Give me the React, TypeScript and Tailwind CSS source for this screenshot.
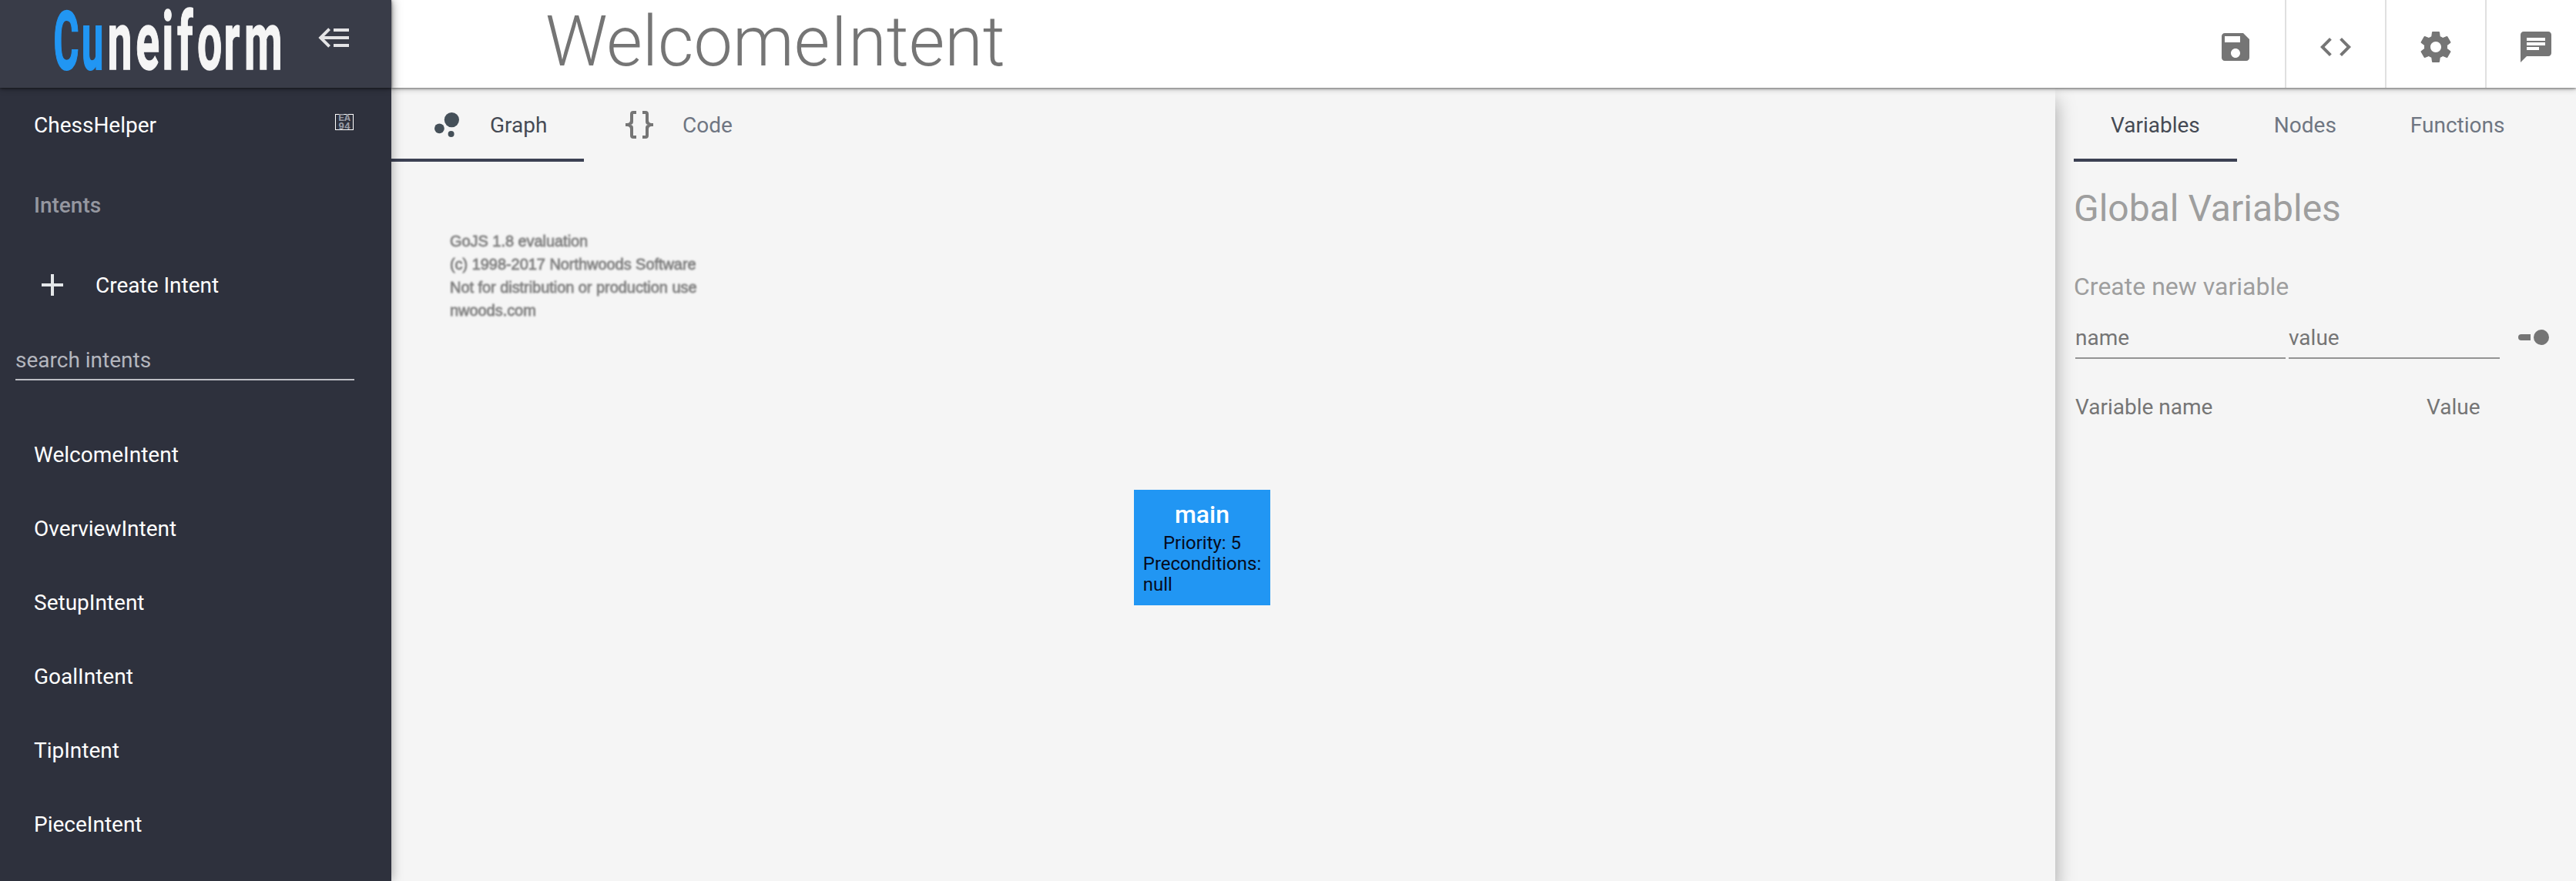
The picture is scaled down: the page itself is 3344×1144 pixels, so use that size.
import React from "react";

const PATHS = {
  back: "M5,13L9,17L7.6,18.42L1.18,12L7.6,5.58L9,7L5,11H21V13H5M21,6V8H11V6H21M21,16V18H11V16H21Z",
  add: "M19 13h-6v6h-2v-6H5v-2h6V5h2v6h6v2z",
  save: "M17 3H5c-1.11 0-2 .9-2 2v14c0 1.1.89 2 2 2h14c1.1 0 2-.9 2-2V7l-4-4zm-5 16c-1.66 0-3-1.34-3-3s1.34-3 3-3 3 1.34 3 3-1.34 3-3 3zm3-10H5V5h10v4z",
  code: "M9.4 16.6L4.8 12l4.6-4.6L8 6l-6 6 6 6 1.4-1.4zm5.2 0l4.6-4.6-4.6-4.6L16 6l6 6-6 6-1.4-1.4z",
  gear: "M19.43 12.98c.04-.32.07-.64.07-.98s-.03-.66-.07-.98l2.11-1.65c.19-.15.24-.42.12-.64l-2-3.46c-.12-.22-.39-.3-.61-.22l-2.49 1c-.52-.4-1.08-.73-1.69-.98l-.38-2.65C14.46 2.18 14.25 2 14 2h-4c-.25 0-.46.18-.49.42l-.38 2.65c-.61.25-1.17.59-1.69.98l-2.49-1c-.23-.09-.49 0-.61.22l-2 3.46c-.13.22-.07.49.12.64l2.11 1.65c-.04.32-.07.65-.07.98s.03.66.07.98l-2.11 1.65c-.19.15-.24.42-.12.64l2 3.46c.12.22.39.3.61.22l2.49-1c.52.4 1.08.73 1.69.98l.38 2.65c.03.24.24.42.49.42h4c.25 0 .46-.18.49-.42l.38-2.65c.61-.25 1.17-.59 1.69-.98l2.49 1c.23.09.49 0 .61-.22l2-3.46c.12-.22.07-.49-.12-.64l-2.11-1.65zM12 15.5c-1.93 0-3.5-1.57-3.5-3.5s1.57-3.5 3.5-3.5 3.5 1.57 3.5 3.5-1.57 3.5-3.5 3.5z",
  chat: "M20 2H4c-1.1 0-1.99.9-1.99 2L2 22l4-4h14c1.1 0 2-.9 2-2V4c0-1.1-.9-2-2-2zM6 9h12v2H6V9zm8 5H6v-2h8v2zm4-6H6V6h12v2z",
  braces: "M8,3A2,2 0 0,0 6,5V9A2,2 0 0,1 4,11H3V13H4A2,2 0 0,1 6,15V19A2,2 0 0,0 8,21H10V19H8V14A2,2 0 0,0 6,12A2,2 0 0,0 8,10V5H10V3M16,3A2,2 0 0,1 18,5V9A2,2 0 0,0 20,11H21V13H20A2,2 0 0,0 18,15V19A2,2 0 0,1 16,21H14V19H16V14A2,2 0 0,1 18,12A2,2 0 0,1 16,10V5H14V3H16Z",
};

function Icon({ name, className = "" }: { name: keyof typeof PATHS; className?: string }) {
  return (
    <svg viewBox="0 0 24 24" className={"size-12 shrink-0 fill-current " + className}>
      <path d={PATHS[name]} />
    </svg>
  );
}

// Condensed wordmark: each half is squeezed horizontally, with its letters spaced by hand.
const MARK_BLUE = [69.5, 106].map((x) => x / 0.48).join(" ");
const MARK_WHITE = [139.6, 176.3, 210.3, 230, 256, 290.6, 317].map((x) => x / 0.545).join(" ");

function Logo() {
  return (
    <svg viewBox="0 0 411 114" className="h-[114px] w-[411px] shrink-0 font-['Roboto'] font-bold">
      <text transform="scale(0.48 1)" x={MARK_BLUE} y="89.5" fontSize="105" fill="#2196f3" stroke="#2196f3" strokeWidth="2">Cu</text>
      <text transform="scale(0.545 1)" x={MARK_WHITE} y="89.5" fontSize="105" fill="#f5f5f5" stroke="#f5f5f5" strokeWidth="1.5">neiform</text>
    </svg>
  );
}

const intents = ["WelcomeIntent", "OverviewIntent", "SetupIntent", "GoalIntent", "TipIntent", "PieceIntent"];

function Sidebar() {
  return (
    <aside className="relative z-20 flex w-[508px] shrink-0 flex-col bg-[#2e313d] text-[28px] leading-8 text-white shadow-[0_0_14px_rgba(0,0,0,0.36)]">
      <div className="flex h-[114px] shrink-0 items-start bg-[#393c48] shadow-[0_1px_3px_rgba(0,0,0,0.5),0_2px_8px_rgba(0,0,0,0.25)]">
        <Logo />
        <Icon name="back" className="mt-[25px] text-[#e4e4e6]" />
      </div>
      <div className="mt-[33px] flex h-8 items-start justify-between pr-[49px] pl-11">
        <span>ChessHelper</span>
        <span className="mt-px flex h-[21px] w-6 flex-col items-center justify-center border border-white font-['Liberation_Mono'] text-[13px] leading-[11px] font-bold text-[#9a9ca5]">
          <span>EA</span>
          <span>94</span>
        </span>
      </div>
      <div className="mt-[72px] pl-11 font-medium text-[#9597a0]">Intents</div>
      <div className="mt-[63px] flex h-12 items-center pl-11">
        <Icon name="add" className="text-[#e4e7e9]" />
        <span className="mt-0.5 ml-8">Create Intent</span>
      </div>
      <div className="mt-[58px] mr-12 ml-5 h-[42px] border-b-2 border-[#bdbec4] text-[#b4b6be]">search intents</div>
      <nav className="mt-[49px] flex flex-col">
        {intents.map((name) => (
          <div key={name} className="flex h-24 items-center pl-11">{name}</div>
        ))}
      </nav>
    </aside>
  );
}

function Header() {
  return (
    <header className="relative z-10 flex h-[114px] shrink-0 items-start bg-white shadow-[0_1px_3px_rgba(0,0,0,0.5),0_2px_8px_rgba(0,0,0,0.2)]">
      <h1 className="mt-0.5 ml-[200px] text-[90px] leading-[106px] font-light text-[#757575]">WelcomeIntent</h1>
      <div className="ml-auto flex h-full w-[506px] overflow-hidden text-[#757575]">
        {(["save", "code", "gear", "chat"] as const).map((n) => (
          <div key={n} className="flex h-full w-[130px] shrink-0 justify-center border-r-2 border-[#e0e0e0]">
            <Icon name={n} className="mt-[37px]" />
          </div>
        ))}
      </div>
    </header>
  );
}

function Workspace() {
  return (
    <main className="relative flex w-[2160px] shrink-0 flex-col bg-[#f5f5f5] shadow-[0_16px_24px_rgba(0,0,0,0.34)]">
      <div className="flex h-24 shrink-0 text-[28px] leading-8">
        <div className="flex w-[250px] items-start gap-8 border-b-4 border-[#3c4153] px-12 pt-6 text-[#454a54]">
          <svg viewBox="0 0 24 24" className="size-12 shrink-0 fill-[#455059]">
            <circle cx="7.2" cy="14.4" r="3.2" />
            <circle cx="14.8" cy="18" r="2" />
            <circle cx="15.2" cy="8.8" r="4.8" />
          </svg>
          <span className="pt-[9px]">Graph</span>
        </div>
        <div className="flex items-start gap-8 px-12 pt-6 text-[#6f7682]">
          <Icon name="braces" className="text-[#757575]" />
          <span className="pt-[9px]">Code</span>
        </div>
      </div>
      <div className="relative flex-1">
        <p className="pt-[88px] pl-[76px] font-['Liberation_Sans'] text-[20px] leading-[30px] tracking-[-0.05px] whitespace-pre text-[#808080] blur-[0.8px] [-webkit-text-stroke:0.8px_#808080]">
          {"GoJS 1.8 evaluation\n(c) 1998-2017 Northwoods Software\nNot for distribution or production use\nnwoods.com"}
        </p>
        <div className="absolute top-[426px] left-[964px] flex h-[150px] w-[177px] flex-col items-center bg-[#2196f3] pt-[14px] text-[24px] leading-[27px] text-[#060b1c]">
          <b className="mb-[5px] text-[32px] leading-[37px] font-medium text-white">main</b>
          <span>Priority: 5</span>
          <span className="whitespace-pre">{"Preconditions:\nnull"}</span>
        </div>
      </div>
    </main>
  );
}

function VariablesPanel() {
  return (
    <section className="flex flex-1 flex-col pl-6 text-[28px] leading-8 text-[#757575]">
      <div className="flex h-24 shrink-0 text-[#6f7682]">
        <div className="border-b-4 border-[#3c4153] px-12 pt-[33px] text-[#454a54]">Variables</div>
        <div className="px-12 pt-[33px]">Nodes</div>
        <div className="px-12 pt-[33px]">Functions</div>
      </div>
      <h2 className="mt-[33px] text-[48px] leading-[56px] text-[#9e9e9e]">Global Variables</h2>
      <h3 className="mt-[55px] text-[32px] leading-[36px] text-[#9e9e9e]">Create new variable</h3>
      <div className="mt-[33px] flex pl-0.5">
        <div className="h-[43px] w-[273px] border-b-2 border-[#949494]">name</div>
        <div className="ml-1 h-[43px] w-[274px] border-b-2 border-[#949494]">value</div>
        <div className="mt-[5px] ml-6 flex h-5 items-center gap-1">
          <div className="h-2 w-4 rounded-l-[4px] bg-[#757575]" />
          <div className="size-5 rounded-full bg-[#757575]" />
        </div>
      </div>
      <div className="mt-[47px] flex pl-0.5">
        <span className="w-[456px]">Variable name</span>
        <span>Value</span>
      </div>
    </section>
  );
}

export default function App() {
  return (
    <div className="flex h-[1144px] w-[3344px] overflow-hidden bg-[#f5f5f5] font-['Roboto',sans-serif]">
      <Sidebar />
      <div className="flex min-w-0 flex-1 flex-col">
        <Header />
        <div className="flex min-h-0 flex-1">
          <Workspace />
          <VariablesPanel />
        </div>
      </div>
    </div>
  );
}
